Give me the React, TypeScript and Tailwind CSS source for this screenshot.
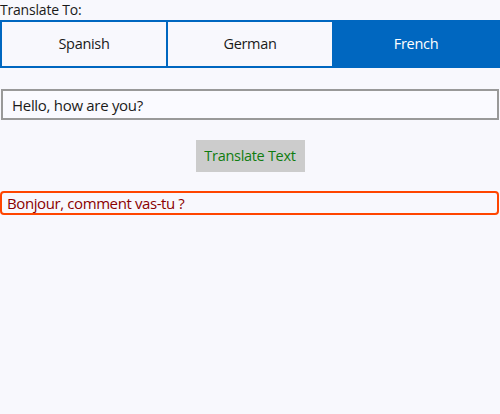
import React, { useState } from 'react';

const LANGUAGES = ['Spanish', 'German', 'French'];

export default function App() {
  const [target, setTarget] = useState('French');
  const [input, setInput] = useState('Hello, how are you?');

  return (
    <div
      className="w-[500px] h-[414px] bg-[#f8f8fd] text-[#1a1a1a] flex flex-col"
      style={{ fontFamily: '"Open Sans", "Noto Sans", sans-serif' }}
    >
      <div className="h-[20px] text-[14px] leading-[20px] tracking-[-0.2px]">Translate To:</div>

      <div className="flex h-[48px] border-2 border-[#0067c0]">
        {LANGUAGES.map((lang, i) => (
          <button
            key={lang}
            onClick={() => setTarget(lang)}
            className={`flex-1 flex items-center justify-center text-[14.5px] tracking-[-0.3px] ${
              i > 0 ? 'border-l-2 border-[#0067c0]' : ''
            } ${target === lang ? 'bg-[#0067c0] text-white' : 'text-[#1a1a1a]'}`}
          >
            {lang}
          </button>
        ))}
      </div>

      <input
        value={input}
        onChange={(e) => setInput(e.target.value)}
        className="mt-[21px] h-[31px] mx-px border-2 border-[#999999] bg-[#fafaff] px-[9px] text-[15px] tracking-[-0.3px] text-[#1a1a1a] outline-none"
      />

      <div className="mt-[20px] flex justify-center">
        <button className="w-[109px] h-[32px] bg-[#cccccc] text-[#107c10] text-[14.5px] tracking-[-0.3px]">
          Translate Text
        </button>
      </div>

      <div className="mt-[19px] h-[24px] mr-px border-2 border-[#ff4500] rounded-[4px] px-[5px] flex items-center text-[15px] tracking-[-0.4px] text-[#8b0000]">
        Bonjour, comment vas-tu ?
      </div>
    </div>
  );
}
